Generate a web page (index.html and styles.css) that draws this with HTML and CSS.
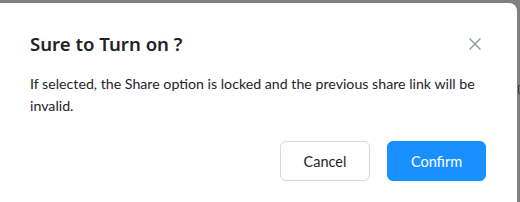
FILE: index.html
```html
<!DOCTYPE html>
<html>
<head>
<meta charset="utf-8">
<link rel="stylesheet" href="styles.css">
</head>
<body>
<div class="behind"></div>
<div class="modal">
  <div class="header">
    <div class="title">Sure to Turn on ?</div>
    <svg class="close" width="12" height="12" viewBox="0 0 12 12"><path d="M1 1L11 11M11 1L1 11" stroke="#8f959e" stroke-width="1.4" stroke-linecap="round"/></svg>
  </div>
  <div class="content">If selected, the Share option is locked and the previous share link will be invalid.</div>
  <div class="footer">
    <button class="btn cancel">Cancel</button>
    <button class="btn confirm">Confirm</button>
  </div>
</div>
</body>
</html>
```
FILE: styles.css
```css
html, body { margin: 0; padding: 0; }
body {
  background: #808080;
  width: 520px;
  height: 202px;
  overflow: hidden;
  font-family: "Lato", "Segoe UI", sans-serif;
  position: relative;
}
.behind {
  position: absolute;
  left: 518px;
  top: 85px;
  width: 3px;
  height: 7px;
  border: 1px solid #3a3a3a;
  border-right: none;
  border-radius: 2px 0 0 2px;
}
.modal {
  position: relative;
  margin-top: 3px;
  margin-left: -8px;
  width: 525px;
  height: 199px;
  background: #fff;
  border-radius: 8px 8px 0 0;
  box-sizing: border-box;
  padding: 28px 31px 0 38px;
}
.header {
  display: flex;
  align-items: center;
  justify-content: space-between;
  height: 26px;
  padding-right: 5px;
}
.title {
  font-family: "Noto Sans", sans-serif;
  font-size: 18.6px;
  font-weight: 600;
  color: #1f2329;
  line-height: 26px;
}
.close { display: block; }
.content {
  margin-top: 16px;
  font-size: 14.2px;
  line-height: 22px;
  color: #1f2329;
  width: 452px;
}
.footer {
  margin-top: 24px;
  display: flex;
  justify-content: flex-end;
  gap: 17px;
}
.btn {
  height: 40px;
  border-radius: 6px;
  font-family: inherit;
  font-size: 14.5px;
  padding: 0;
  box-sizing: border-box;
}
.cancel {
  width: 90px;
  background: #fff;
  border: 1px solid #d9d9d9;
  color: #1f2329;
}
.confirm {
  width: 99px;
  background: #1890ff;
  border: 1px solid #1890ff;
  color: #fff;
}
```
